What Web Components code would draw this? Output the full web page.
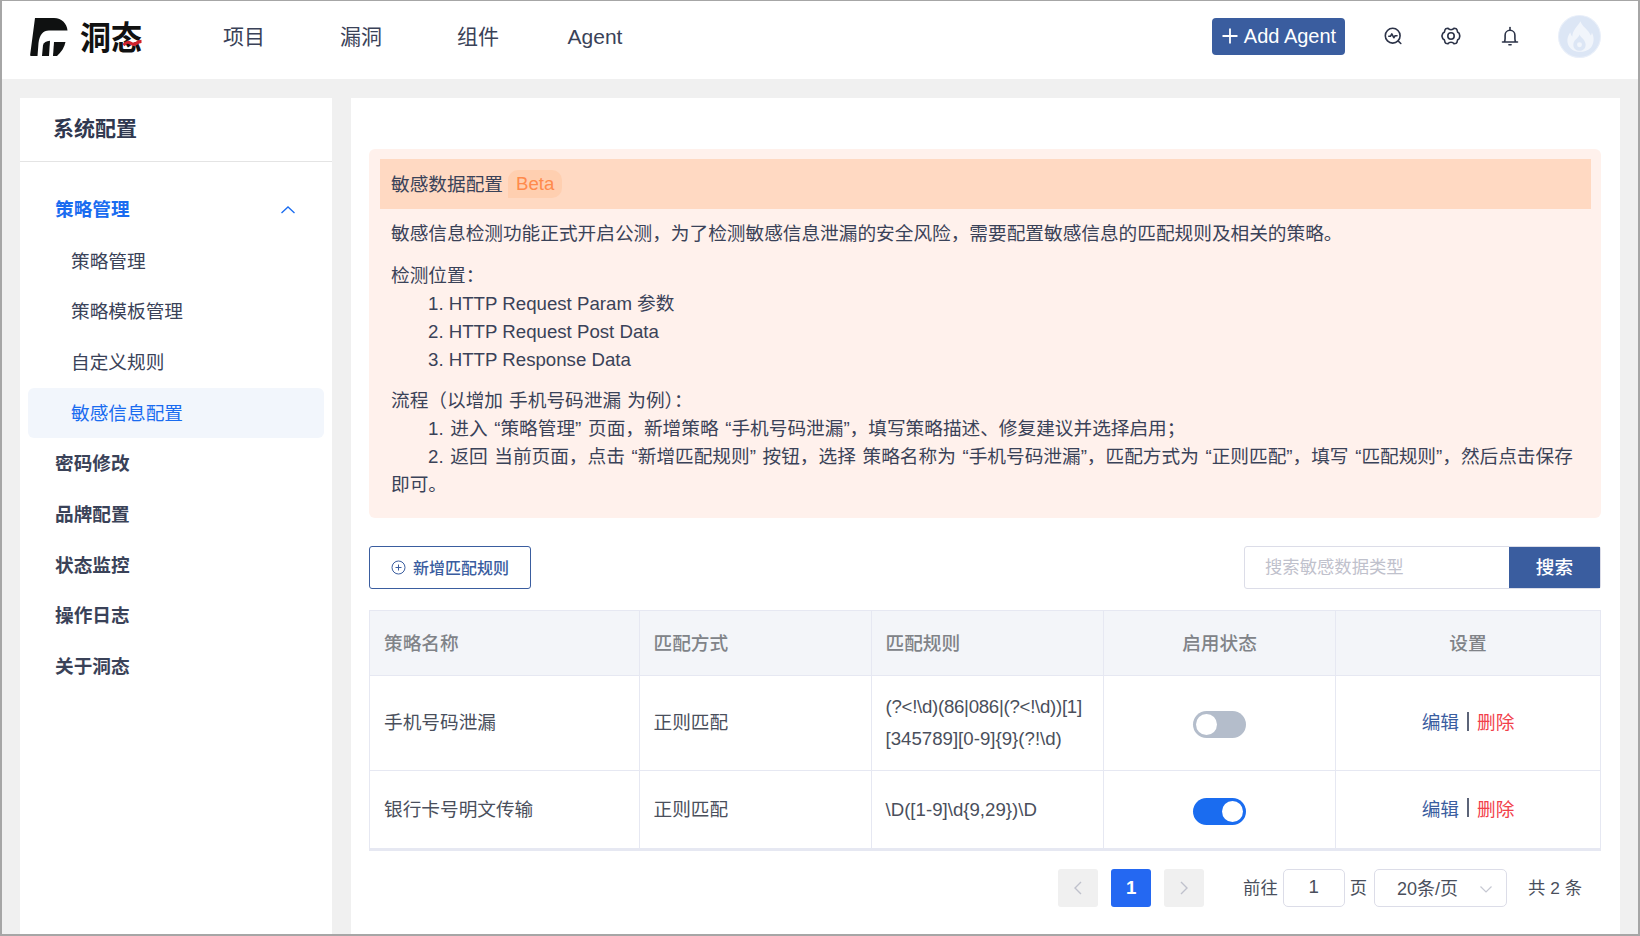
<!DOCTYPE html>
<html lang="zh">
<head>
<meta charset="utf-8">
<title>洞态 - 系统配置</title>
<style>
  html,body{ margin:0; height:100%; }
  body{
    font-family:"Liberation Sans","Noto Sans CJK SC",sans-serif;
    font-size:18.67px; color:#3a4258; background:#f0f0f0;
  }
</style>
</head>
<body>
<dt-app>
  <dt-header slot="header"></dt-header>
  <dt-sidebar slot="side"></dt-sidebar>
  <dt-main slot="main">
    <dt-notice></dt-notice>
    <dt-toolbar></dt-toolbar>
    <dt-table></dt-table>
    <dt-pager></dt-pager>
  </dt-main>
</dt-app>

<script>
(function(){
  // small helper: one class per element, markup + style set in the shadow root
  function define(name, html){
    class El extends HTMLElement {
      constructor(){
        super();
        this.attachShadow({mode:'open'}).innerHTML = html;
      }
    }
    customElements.define(name, El);
  }

  // ───────── shell ─────────
  define('dt-app', `
    <style>
      :host{
        display:grid; grid-template-columns:330px 1fr; grid-template-rows:78px 1fr;
        column-gap:19px; height:936px; box-sizing:border-box; overflow:hidden;
        border:solid #a6a6a6; border-width:1px 2px 2px 2px;
        background:#f0f0f0;
      }
      .head{ grid-column:1 / 3; }
      .side{ margin:19px 0 0 18px; display:flex; min-height:0; }
      .main{ margin:19px 18px 0 0; display:flex; min-height:0; min-width:0; }
    </style>
    <div class="head"><slot name="header"></slot></div>
    <div class="side"><slot name="side"></slot></div>
    <div class="main"><slot name="main"></slot></div>
  `);

  // ───────── header ─────────
  define('dt-header', `
    <style>
      :host{ display:flex; align-items:center; height:78px; padding-bottom:6px; box-sizing:border-box; background:#fff; color:#3a4258; }
      .logo{ display:flex; align-items:center; margin-left:28px; width:155.500px; flex:none; }
      .word{
        position:relative; margin:-2px 0 0 8px; font:700 31px/40px "Noto Sans CJK SC",sans-serif;
        color:#111; white-space:nowrap; transform:scaleY(1.08);
      }
      .word svg{ position:absolute; right:0; bottom:10px; }
      nav{ display:flex; font-size:21px; line-height:28px; }
      nav a{ width:117px; text-align:center; color:#3a4258; white-space:nowrap; }
      .right{ margin:-2px 37.500px 0 auto; display:flex; align-items:center; }
      .add{
        display:flex; align-items:center; height:37px; width:133px; box-sizing:border-box;
        justify-content:center; gap:5px; background:#3a5d9f; color:#fff; border-radius:4px;
        font-size:20px; margin-right:35.500px; white-space:nowrap;
      }
      .ic{ width:24px; height:24px; display:block; margin-right:34.500px; }
      .avatar{ width:43px; height:43px; display:block; margin-left:1.500px; }
    </style>
    <div class="logo">
      <svg width="42" height="42" viewBox="0 0 42 42">
        <path fill="#0f1111" d="M5 2h19c8 0 13 6 13.500 12.500H19c-6 0-9.500 4.500-10.500 12.500L7.500 40h-6c-1 0-1.500-.5-1.300-1.500z"/>
        <path fill="#0f1111" d="M24 26h11.500c-1 5-4 10-8.500 14h-4z"/>
        <path fill="#0f1111" d="M12 40l1-11c1-2.500 3-4 7-4.300L19 40z"/>
      </svg>
      <span class="word">洞态<svg width="19" height="7" viewBox="0 0 19 7"><path d="M.5 5.500c3-3 4.500-3.500 7-2s4 1.500 5.500.5 3-2 5.500-2" fill="none" stroke="#d0222c" stroke-width="3"/></svg></span>
    </div>
    <nav><a>项目</a><a>漏洞</a><a>组件</a><a>Agent</a></nav>
    <div class="right">
      <div class="add">
        <svg width="18" height="18" viewBox="0 0 18 18"><path d="M9 1.500v15M1.500 9h15" stroke="#fff" stroke-width="1.800" fill="none"/></svg>
        <span>Add Agent</span>
      </div>
      <svg class="ic" viewBox="0 0 24 24" fill="none" stroke="#2c3348" stroke-width="1.600" stroke-linecap="round" stroke-linejoin="round">
        <circle cx="11.700" cy="11.700" r="7.400"/><path d="M17.300 17.200l2.500 2.300"/><path d="M7.800 12.300h1.600l1.400-2.400 2 3.800 1.300-2h1.900"/>
      </svg>
      <svg class="ic" viewBox="0 0 24 24" fill="none" stroke="#2c3348" stroke-width="1.600" stroke-linejoin="round">
        <path d="M9 4.200c.5 1 1.600 1.600 3 1.600s2.500-.6 3-1.600l2.300.6c.6.500.9 1.200.9 2 0 1.100.8 2 2 2.500l.6 2.700-.6 2.700c-1.200.500-2 1.400-2 2.500 0 .8-.3 1.500-.9 2l-2.300.6c-.5-1-1.600-1.600-3-1.600s-2.500.6-3 1.600l-2.300-.6c-.6-.5-.9-1.200-.9-2 0-1.100-.8-2-2-2.500L2.900 12l.9-2.700c1.200-.5 2-1.400 2-2.500 0-.8.3-1.500.9-2z"/>
        <circle cx="12" cy="12" r="3.200"/>
      </svg>
      <svg class="ic" viewBox="0 0 24 24" fill="none" stroke="#2c3348" stroke-width="1.600" stroke-linecap="round" stroke-linejoin="round">
        <path d="M4.500 18h15M6.300 18c.6-1 .8-2 .8-3.500v-3.300a4.900 4.900 0 0 1 9.800 0v3.300c0 1.500.2 2.500.8 3.500"/><path d="M12 3.500v2.500"/><path d="M10.900 20.800h2.200"/>
      </svg>
      <svg class="avatar" viewBox="0 0 42 42">
        <circle cx="21" cy="21" r="20.500" fill="#dce6f5" stroke="#e9eff9" stroke-width="1"/>
        <path fill="#f1f5fb" d="M22 6c1 5 8 8 10 14 .8-1 1-2 1-3 3 5 2 11-1 15-3 3-7 4-11 4s-8-2-10-5c-3-5-2-10 1-14 .5 2 1 3 2 4 0-6 5-10 8-15z"/>
        <path fill="#dce6f5" d="M21 19c1 3 6 5 6 10 0 4-3 6-6 6s-6-2-6-6c0-5 5-6 6-10z"/>
        <circle cx="21" cy="29" r="2.400" fill="#f1f5fb"/>
      </svg>
    </div>
  `);

  // ───────── sidebar ─────────
  define('dt-sidebar', `
    <style>
      :host{ display:block; width:312px; flex:none; background:#fff; color:#3a4258; }
      h2{
        margin:0; height:63px; padding-left:33px; font-size:21px; font-weight:600;
        line-height:62px; border-bottom:1px solid #e4e4e4; color:#30384f;
      }
      ul{ list-style:none; margin:0; padding:23px 8px 0; }
      li{ height:50.670px; line-height:52.670px; padding-left:27px; box-sizing:border-box; font-weight:600; white-space:nowrap; }
      li.open{ display:flex; align-items:center; justify-content:space-between; color:#1a6cf0; padding-right:28px; }
      li.sub{ font-weight:400; padding-left:43px; }
      li.on{ background:#f2f6fc; color:#1a6cf0; border-radius:6px; }
    </style>
    <h2>系统配置</h2>
    <ul>
      <li class="open"><span>策略管理</span>
        <svg width="16" height="10" viewBox="0 0 16 10"><path d="M1.500 8L8 2l6.500 6" fill="none" stroke="#1a6cf0" stroke-width="1.300"/></svg>
      </li>
      <li class="sub">策略管理</li>
      <li class="sub">策略模板管理</li>
      <li class="sub">自定义规则</li>
      <li class="sub on">敏感信息配置</li>
      <li>密码修改</li>
      <li>品牌配置</li>
      <li>状态监控</li>
      <li>操作日志</li>
      <li>关于洞态</li>
    </ul>
  `);

  // ───────── main panel ─────────
  define('dt-main', `
    <style>
      :host{ display:flex; flex-direction:column; flex:1; min-width:0; background:#fff; padding:51px 19px 0 18px; box-sizing:border-box; }
    </style>
    <slot></slot>
  `);

  define('dt-notice', `
    <style>
      :host{ display:block; background:#fff1ec; border-radius:6px; padding:10px 10px 0 11px; height:369px; box-sizing:border-box; color:#3a4258; line-height:28px; }
      .head{ display:flex; align-items:center; height:50px; background:#ffd9c2; padding-left:11px; }
      .head .t{ padding-top:2px; }
      .beta{
        margin-left:5px; height:28px; line-height:28px; padding:0 8px; color:#ff8a4c;
        background:#ffcfb0; border-radius:10px 10px 10px 0;
      }
      p{ margin:0; padding:0 11px; }
      .lead{ padding-top:11px; }
      .block{ margin-top:13.500px; }
      .in{ padding-left:48px; }
      .flow{ word-spacing:1.500px; }
    </style>
    <div class="head"><span class="t">敏感数据配置</span><span class="beta">Beta</span></div>
    <p class="lead">敏感信息检测功能正式开启公测，为了检测敏感信息泄漏的安全风险，需要配置敏感信息的匹配规则及相关的策略。</p>
    <p class="block">检测位置：</p>
    <p class="in">1. HTTP Request Param 参数</p>
    <p class="in">2. HTTP Request Post Data</p>
    <p class="in">3. HTTP Response Data</p>
    <p class="block" style="word-spacing:1px">流程（以增加 手机号码泄漏 为例）：</p>
    <p class="in flow">1. 进入 “策略管理” 页面，新增策略 “手机号码泄漏”，填写策略描述、修复建议并选择启用；</p>
    <p class="flow" style="text-indent:37px">2. 返回 当前页面，点击 “新增匹配规则” 按钮，选择 策略名称为 “手机号码泄漏”，匹配方式为 “正则匹配”，填写 “匹配规则”，然后点击保存即可。</p>
  `);

  define('dt-toolbar', `
    <style>
      :host{ display:flex; justify-content:space-between; margin-top:28px; height:43px; flex:none; }
      .add{
        display:flex; align-items:center; justify-content:center; gap:7px; width:162px; box-sizing:border-box;
        border:1px solid #3a5d9f; border-radius:3px; color:#3a5d9f; font-weight:500; font-size:16px;
      }
      .add span{ margin-bottom:2px; }
      .search{ display:flex; width:357px; box-sizing:border-box; border:1px solid #dcdde8; border-radius:3px; }
      .q{ flex:1; padding-left:20px; line-height:41px; color:#bfc1cc; font-size:17.330px; }
      .go{ width:91px; background:#3a5d9f; color:#fff; text-align:center; line-height:41px; font-weight:500; }
    </style>
    <div class="add">
      <svg width="15" height="15" viewBox="0 0 15 15"><circle cx="7.500" cy="7.500" r="6.500" fill="none" stroke="#3a5d9f" stroke-width="1"/><path d="M7.500 4.500v6M4.500 7.500h6" stroke="#3a5d9f" stroke-width="1" fill="none"/></svg>
      <span>新增匹配规则</span>
    </div>
    <div class="search"><div class="q">搜索敏感数据类型</div><div class="go">搜索</div></div>
  `);

  define('dt-switch', `
    <style>
      :host{ display:inline-block; width:53px; height:27px; margin-top:3px; border-radius:14px; background:#b4bdcb; position:relative; }
      :host([on]){ background:#1a6cf0; }
      i{ position:absolute; top:3px; left:3px; width:21px; height:21px; border-radius:50%; background:#fff; }
      :host([on]) i{ left:auto; right:3px; }
    </style>
    <i></i>
  `);

  define('dt-table', `
    <style>
      :host{ display:grid; grid-template-columns:269px 232px 232px 232px 1fr; flex:none; margin-top:21px; border:solid #e6e8f2; border-width:1px 1px 3px 1px; color:#4a4f5c; }
      .c{ display:flex; align-items:center; padding:0 13.500px; border-left:1px solid #e6e8f2; border-top:1px solid #e6e8f2; min-width:0; line-height:32px; box-sizing:border-box; }
      .first{ border-left:0; padding-left:14px; }
      .th{ height:64px; padding-top:2px; background:#f3f5f9; color:#808388; font-weight:500; border-top:0; }
      .mid{ justify-content:center; }
      .r1{ height:95px; }
      .r2{ height:78px; }
      .ed{ color:#3a5d9f; } .del{ color:#f2404a; }
      .tight{ letter-spacing:-.28px; }
      .sep{ display:inline-block; width:2px; height:19px; background:#5c6478; margin:0 8px; position:relative; top:-2px; }
    </style>
    <div class="c th first">策略名称</div><div class="c th">匹配方式</div><div class="c th">匹配规则</div><div class="c th mid">启用状态</div><div class="c th mid">设置</div>
    <div class="c r1 first">手机号码泄漏</div><div class="c r1">正则匹配</div><div class="c r1"><span><span class="tight">(?&lt;!\\d)(86|086|(?&lt;!\\d))[1]</span>[345789][0-9]{9}(?!\\d)</span></div><div class="c r1 mid"><dt-switch></dt-switch></div><div class="c r1 mid"><span class="ed">编辑</span><span class="sep"></span><span class="del">删除</span></div>
    <div class="c r2 first">银行卡号明文传输</div><div class="c r2">正则匹配</div><div class="c r2">\\D([1-9]\\d{9,29})\\D</div><div class="c r2 mid"><dt-switch on></dt-switch></div><div class="c r2 mid"><span class="ed">编辑</span><span class="sep"></span><span class="del">删除</span></div>
  `);

  define('dt-pager', `
    <style>
      :host{ display:flex; align-items:center; justify-content:flex-end; height:38px; margin-top:18px; padding-right:19px; color:#4a4f5c; font-size:17.330px; flex:none; }
      .b{ width:40px; height:38px; border-radius:3px; background:#f0f0f0; display:flex; align-items:center; justify-content:center; }
      .cur{ background:#2468f2; color:#fff; font-weight:700; margin:0 13px; font-size:18.670px; }
      .go{ margin-left:39px; }
      span{ margin-top:-3px; }
      .box{ height:38px; box-sizing:border-box; border:1px solid #dcdde8; border-radius:5px; display:flex; align-items:center; justify-content:center; }
      .n{ width:62px; margin:0 5px; font-size:18.670px; padding-bottom:2px; }
      .sel{ width:133px; margin-left:7px; position:relative; font-size:18px; }
      .sel span{ margin-right:26px; }
      .sel svg{ position:absolute; right:13px; top:15px; }
      .total{ margin-left:21px; }
    </style>
    <div class="b"><svg width="10" height="16" viewBox="0 0 10 16"><path d="M8 2L2 8l6 6" fill="none" stroke="#bfc1cc" stroke-width="1.400"/></svg></div>
    <div class="b cur">1</div>
    <div class="b"><svg width="10" height="16" viewBox="0 0 10 16"><path d="M2 2l6 6-6 6" fill="none" stroke="#bfc1cc" stroke-width="1.400"/></svg></div>
    <span class="go">前往</span>
    <div class="box n">1</div>
    <span>页</span>
    <div class="box sel"><span>20条/页</span><svg width="14" height="9" viewBox="0 0 14 9"><path d="M1.500 1.500L7 7l5.500-5.500" fill="none" stroke="#c6c8d2" stroke-width="1.200"/></svg></div>
    <span class="total">共 2 条</span>
  `);
})();
</script>
</body>
</html>
